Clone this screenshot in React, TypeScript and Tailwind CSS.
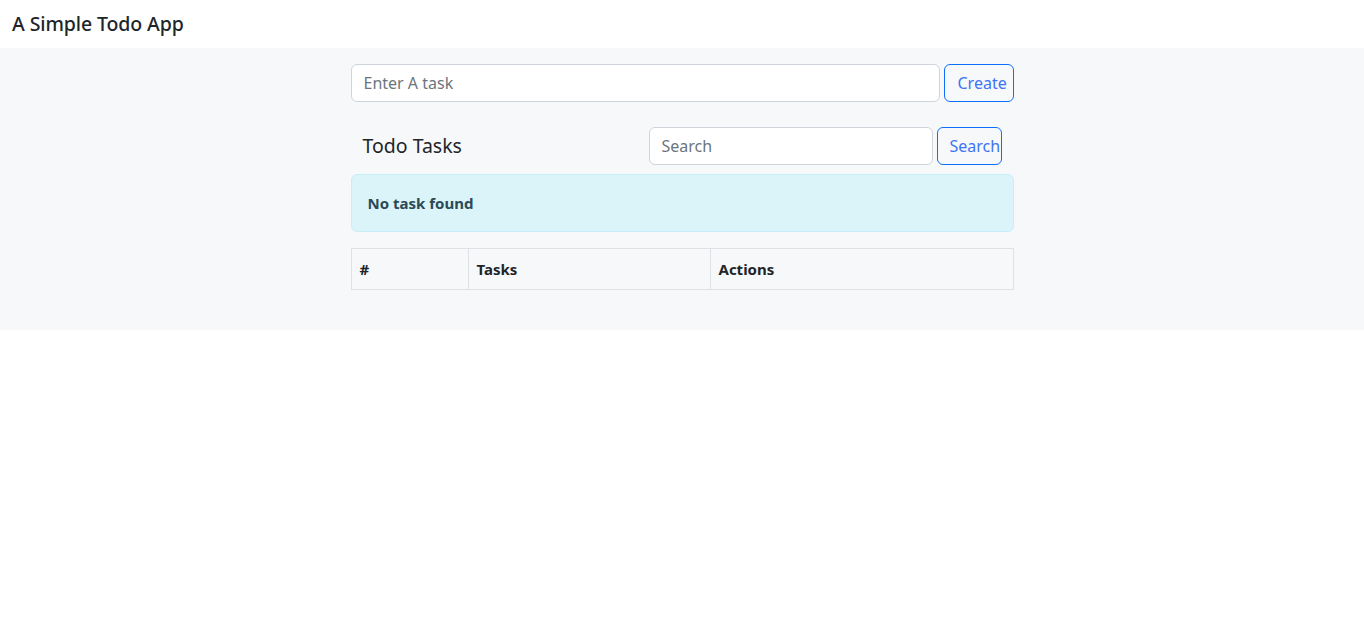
import React from "react";

export default function App() {
  return (
    <div className="min-h-[633px] bg-white text-[#212529]" style={{ fontFamily: '"Noto Sans", sans-serif' }}>
      <header className="h-12 flex items-center px-3 bg-white">
        <h1 className="text-[19.5px] font-medium tracking-[-0.1px]">A Simple Todo App</h1>
      </header>
      <main className="bg-[#f7f8fa] pt-4 pb-10">
        <div className="w-[663px] mx-auto">
          <div className="flex gap-1 h-[38px]">
            <input
              className="flex-1 h-full rounded-md border border-[#ced4da] bg-white px-3 text-[16px] placeholder:text-[#6c757d] outline-none"
              placeholder="Enter A task"
            />
            <button className="w-[70px] h-full rounded-md border border-[#0d6efd] text-[#3d74f3] text-[16px] flex items-center pl-[13px] whitespace-nowrap overflow-visible">Create</button>
          </div>
          <div className="flex items-center mt-[25px] h-[38px]">
            <h2 className="pl-3 text-[19.5px] flex-1">Todo Tasks</h2>
            <div className="flex gap-1 h-full mr-3">
              <input
                className="w-[284px] h-full rounded-md border border-[#ced4da] bg-white px-3 text-[16px] placeholder:text-[#6c757d] outline-none"
                placeholder="Search"
              />
              <button className="w-[65px] h-full rounded-md border border-[#0d6efd] text-[#3d74f3] text-[16px] flex items-center pl-3 whitespace-nowrap overflow-visible">Search</button>
            </div>
          </div>
          <div className="mt-[9px] h-[58px] rounded-md border border-[#c8eff8] bg-[#daf4fa] flex items-center px-4 text-[15px] font-bold text-[#2b4a55]">
            No task found
          </div>
          <table className="mt-4 w-full border-collapse text-[15px]">
            <thead>
              <tr className="h-[41px] bg-[#f7f8fa]">
                <th className="w-[117px] border border-[#dee2e6] text-left px-2 font-bold">#</th>
                <th className="w-[242px] border border-[#dee2e6] text-left px-2 font-bold">Tasks</th>
                <th className="border border-[#dee2e6] text-left px-2 font-bold">Actions</th>
              </tr>
            </thead>
          </table>
        </div>
      </main>
    </div>
  );
}
